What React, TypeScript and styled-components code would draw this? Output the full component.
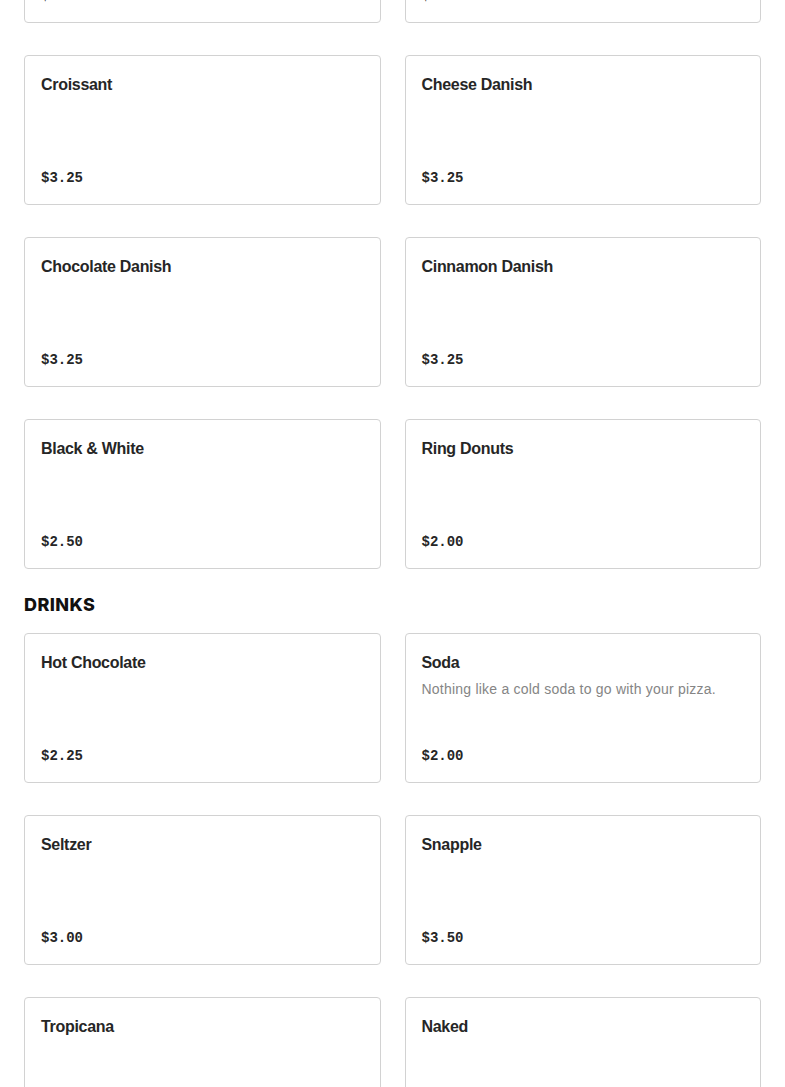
import React from "react";
import styled, { createGlobalStyle } from "styled-components";

const Global = createGlobalStyle`
  html, body { margin: 0; padding: 0; background: #fff; }
  body { font-family: "Liberation Sans", Arial, sans-serif; color: #222; }
`;

const Page = styled.div`
  padding: 0 24px;
  margin-top: -127px;
  display: flex;
  flex-direction: column;
  gap: 24px;
`;

const Section = styled.section`
  display: flex;
  flex-direction: column;
  gap: 16px;
`;

const Heading = styled.h2`
  margin: 0;
  font-family: Inter, "Liberation Sans", Arial, sans-serif;
  font-size: 18px;
  line-height: 24px;
  font-weight: 800;
  letter-spacing: 0.4px;
  color: #111;
  text-transform: uppercase;
`;

const Grid = styled.div`
  display: grid;
  grid-template-columns: 1fr 1fr;
  column-gap: 24px;
  row-gap: 32px;
`;

const Card = styled.div`
  box-sizing: border-box;
  height: 150px;
  border: 1px solid #d2d2d2;
  border-radius: 4px;
  padding: 16px;
  display: flex;
  flex-direction: column;
  justify-content: space-between;
  background: #fff;
`;

const Info = styled.div`
  display: flex;
  flex-direction: column;
`;

const Title = styled.div`
  font-size: 16px;
  line-height: 26px;
  font-weight: 700;
  letter-spacing: -0.3px;
  color: #262626;
`;

const Desc = styled.div`
  margin-top: 3px;
  font-size: 14px;
  line-height: 20px;
  letter-spacing: 0.22px;
  color: #858585;
`;

const Price = styled.div`
  font-family: "Liberation Mono", "Courier New", monospace;
  font-size: 14px;
  line-height: 20px;
  font-weight: 700;
  color: #262626;
`;

type Item = { name: string; price: string; desc?: string };

const bakery: Item[] = [
  { name: "Muffin", price: "$3.00" },
  { name: "Bagel", price: "$3.25" },
  { name: "Croissant", price: "$3.25" },
  { name: "Cheese Danish", price: "$3.25" },
  { name: "Chocolate Danish", price: "$3.25" },
  { name: "Cinnamon Danish", price: "$3.25" },
  { name: "Black & White", price: "$2.50" },
  { name: "Ring Donuts", price: "$2.00" },
];

const drinks: Item[] = [
  { name: "Hot Chocolate", price: "$2.25" },
  { name: "Soda", price: "$2.00", desc: "Nothing like a cold soda to go with your pizza." },
  { name: "Seltzer", price: "$3.00" },
  { name: "Snapple", price: "$3.50" },
  { name: "Tropicana", price: "$3.50" },
  { name: "Naked", price: "$4.50" },
];

const MenuCard = ({ item }: { item: Item }) => (
  <Card>
    <Info>
      <Title>{item.name}</Title>
      {item.desc && <Desc>{item.desc}</Desc>}
    </Info>
    <Price>{item.price}</Price>
  </Card>
);

export default function App() {
  return (
    <>
      <Global />
      <Page>
        <Section>
          <Grid>
            {bakery.map((it) => (
              <MenuCard key={it.name} item={it} />
            ))}
          </Grid>
        </Section>
        <Section>
          <Heading>Drinks</Heading>
          <Grid>
            {drinks.map((it) => (
              <MenuCard key={it.name} item={it} />
            ))}
          </Grid>
        </Section>
      </Page>
    </>
  );
}
